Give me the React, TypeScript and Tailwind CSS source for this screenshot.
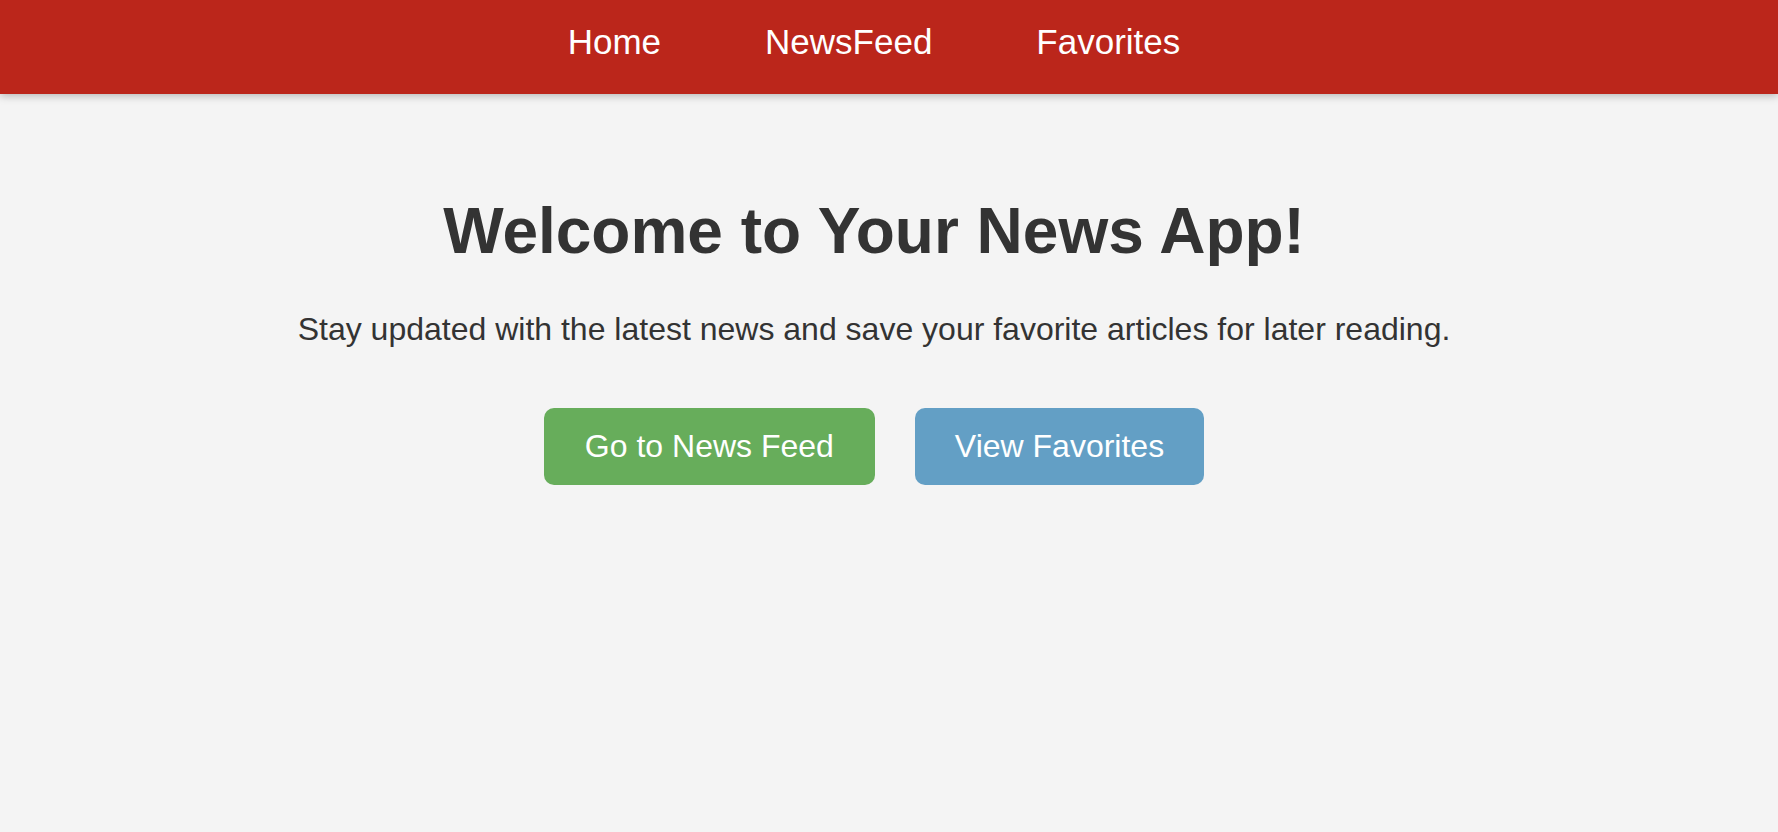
export default function App() {
  const navLinks = [
    { name: 'Home', link: '#home' },
    { name: 'NewsFeed', link: '#newsfeed' },
    { name: 'Favorites', link: '#favorites' }
  ];

  return (
    <div className="min-h-[832px] bg-[#f4f4f4] font-['Liberation_Sans',Arial,sans-serif] text-[#333]">
      {/* Header */}
      <nav className="h-[94px] bg-[#bb261b] shadow-[0_2px_8px_rgba(0,0,0,0.25)] relative">
        <div className="flex justify-center gap-[104px] pt-[22px] pr-[30px]">
          {navLinks.map((item, index) => (
            <a
              key={index}
              href={item.link}
              className="text-[35px] leading-[40px] text-white no-underline"
            >
              {item.name}
            </a>
          ))}
        </div>
      </nav>

      {/* Hero */}
      <main className="flex flex-col items-center pt-[100px] pr-[30px] text-center">
        <h1 className="text-[64px] leading-[74px] font-bold">Welcome to Your News App!</h1>
        <p className="mt-[43px] text-[32px] leading-[37px]">
          Stay updated with the latest news and save your favorite articles for later reading.
        </p>
        <div className="mt-[60px] flex gap-[40px]">
          <button className="rounded-[10px] bg-[#67ad5b] px-[41px] py-[20px] text-[32px] leading-[37px] text-white">
            Go to News Feed
          </button>
          <button className="rounded-[10px] bg-[#639fc5] px-[40px] py-[20px] text-[32px] leading-[37px] text-white">
            View Favorites
          </button>
        </div>
      </main>
    </div>
  );
}
